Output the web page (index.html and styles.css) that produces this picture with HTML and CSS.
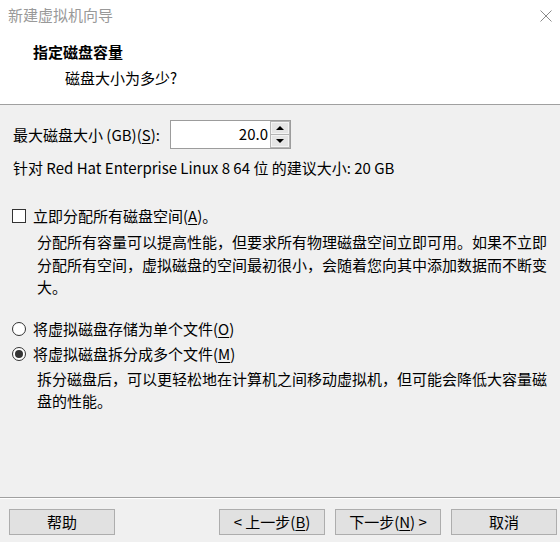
FILE: index.html
```html
<!DOCTYPE html>
<html lang="zh-CN">
<head>
<meta charset="utf-8">
<title>新建虚拟机向导</title>
<link rel="stylesheet" href="styles.css">
</head>
<body>
<div class="dialog">
  <div class="header">
    <div class="titlebar">
      <span class="title">新建虚拟机向导</span>
      <svg class="close" width="12" height="12" viewBox="0 0 12 12"><path d="M0.5 0.5 L11.5 11.5 M11.5 0.5 L0.5 11.5" stroke="#8a8a8a" stroke-width="1" fill="none"/></svg>
    </div>
    <div class="heading">指定磁盘容量</div>
    <div class="subheading">磁盘大小为多少?</div>
  </div>
  <div class="content">
    <div class="size-row">
      <span class="label">最大磁盘大小 (GB)(<u>S</u>):</span>
      <div class="spin">
        <span class="spin-value">20.0</span>
        <div class="spin-btns">
          <span class="spin-btn"><span class="tri-up"></span></span>
          <span class="spin-btn"><span class="tri-down"></span></span>
        </div>
      </div>
    </div>
    <div class="recommend">针对 Red Hat Enterprise Linux 8 64 位 的建议大小: 20 GB</div>
    <div class="check-row">
      <span class="checkbox"></span>
      <span>立即分配所有磁盘空间(<u>A</u>)。</span>
    </div>
    <p class="desc">分配所有容量可以提高性能，但要求所有物理磁盘空间立即可用。如果不立即分配所有空间，虚拟磁盘的空间最初很小，会随着您向其中添加数据而不断变大。</p>
    <div class="radio-row first">
      <span class="radio"></span>
      <span>将虚拟磁盘存储为单个文件(<u>O</u>)</span>
    </div>
    <div class="radio-row">
      <span class="radio checked"></span>
      <span>将虚拟磁盘拆分成多个文件(<u>M</u>)</span>
    </div>
    <p class="desc desc2">拆分磁盘后，可以更轻松地在计算机之间移动虚拟机，但可能会降低大容量磁盘的性能。</p>
  </div>
  <div class="footer">
    <button class="btn">帮助</button>
    <div class="btn-group">
      <button class="btn">&lt; 上一步(<u>B</u>)</button>
      <button class="btn">下一步(<u>N</u>) &gt;</button>
      <button class="btn">取消</button>
    </div>
  </div>
</div>
</body>
</html>
```

FILE: styles.css
```css
* { box-sizing: border-box; }
html, body {
  margin: 0;
  padding: 0;
}
body {
  width: 560px;
  height: 542px;
  background: #f0f0f0;
  font-family: "Segoe UI", "Noto Sans CJK SC", sans-serif;
  font-size: 15px;
  color: #000;
  overflow: hidden;
}
.dialog {
  width: 560px;
  height: 542px;
  display: flex;
  flex-direction: column;
}
.header {
  background: #fff;
  height: 105px;
  border-bottom: 1px solid #a0a0a0;
  flex: none;
}
.titlebar {
  height: 31px;
  display: flex;
  align-items: center;
  justify-content: space-between;
  padding: 0 8px 2px 8px;
}
.title {
  color: #999;
  line-height: 20px;
}
.close {
  margin-top: 3px;
}
.heading {
  margin-top: 11px;
  padding-left: 33px;
  font-weight: bold;
  line-height: 20px;
}
.subheading {
  margin-top: 6px;
  padding-left: 65px;
  line-height: 20px;
}
.content {
  flex: 1;
  padding: 15px 12px 0 12px;
}
.size-row {
  display: flex;
  align-items: center;
  height: 29px;
  padding-left: 1px;
}
.label {
  width: 157px;
  line-height: 20px;
}
.spin {
  display: flex;
  width: 121px;
  height: 29px;
  border: 1px solid #9c9c9c;
  background: #fff;
}
.spin-value {
  flex: 1;
  text-align: right;
  line-height: 26px;
  padding-right: 2px;
}
.spin-btns {
  width: 20px;
  display: flex;
  flex-direction: column;
}
.spin-btn {
  flex: 1;
  background: #e5e5e5;
  border: 1px solid #b5b5b5;
  box-shadow: inset 0 0 0 1px #f4f4f4;
  display: flex;
  align-items: center;
  justify-content: center;
}
.spin-btn + .spin-btn {
  border-top: none;
}
.tri-up {
  width: 0;
  height: 0;
  border-left: 4px solid transparent;
  border-right: 4px solid transparent;
  border-bottom: 4px solid #000;
}
.tri-down {
  width: 0;
  height: 0;
  border-left: 4px solid transparent;
  border-right: 4px solid transparent;
  border-top: 4px solid #000;
}
.recommend {
  margin-top: 9px;
  padding-left: 1px;
  line-height: 20px;
}
.check-row, .radio-row {
  display: flex;
  align-items: center;
  gap: 7px;
  line-height: 20px;
}
.check-row {
  margin-top: 28px;
}
.checkbox {
  width: 14px;
  height: 14px;
  border: 1px solid #333;
  background: #fff;
  flex: none;
}
.desc {
  margin: 5px 0 0 25px;
  line-height: 22.5px;
}
.radio-row.first {
  margin-top: 20px;
}
.radio-row {
  margin-top: 5px;
}
.radio {
  width: 14px;
  height: 14px;
  border: 1px solid #333;
  border-radius: 50%;
  background: #fff;
  flex: none;
  display: flex;
  align-items: center;
  justify-content: center;
}
.radio.checked::after {
  content: "";
  width: 8px;
  height: 8px;
  border-radius: 50%;
  background: #333;
}
.desc2 {
  margin-top: 4px;
}
.footer {
  flex: none;
  height: 45px;
  border-top: 1px solid #a0a0a0;
  box-shadow: inset 0 1px 0 #fff;
  display: flex;
  justify-content: space-between;
  align-items: flex-start;
  padding: 11px 3px 0 9px;
}
.btn-group {
  display: flex;
  gap: 10px;
}
.btn {
  width: 106px;
  height: 26px;
  background: #e1e1e1;
  border: 1px solid #adadad;
  font-family: inherit;
  font-size: 15px;
  color: #000;
  padding: 0;
  line-height: 22px;
}
u {
  text-decoration: underline;
  text-underline-offset: 2px;
}
```
